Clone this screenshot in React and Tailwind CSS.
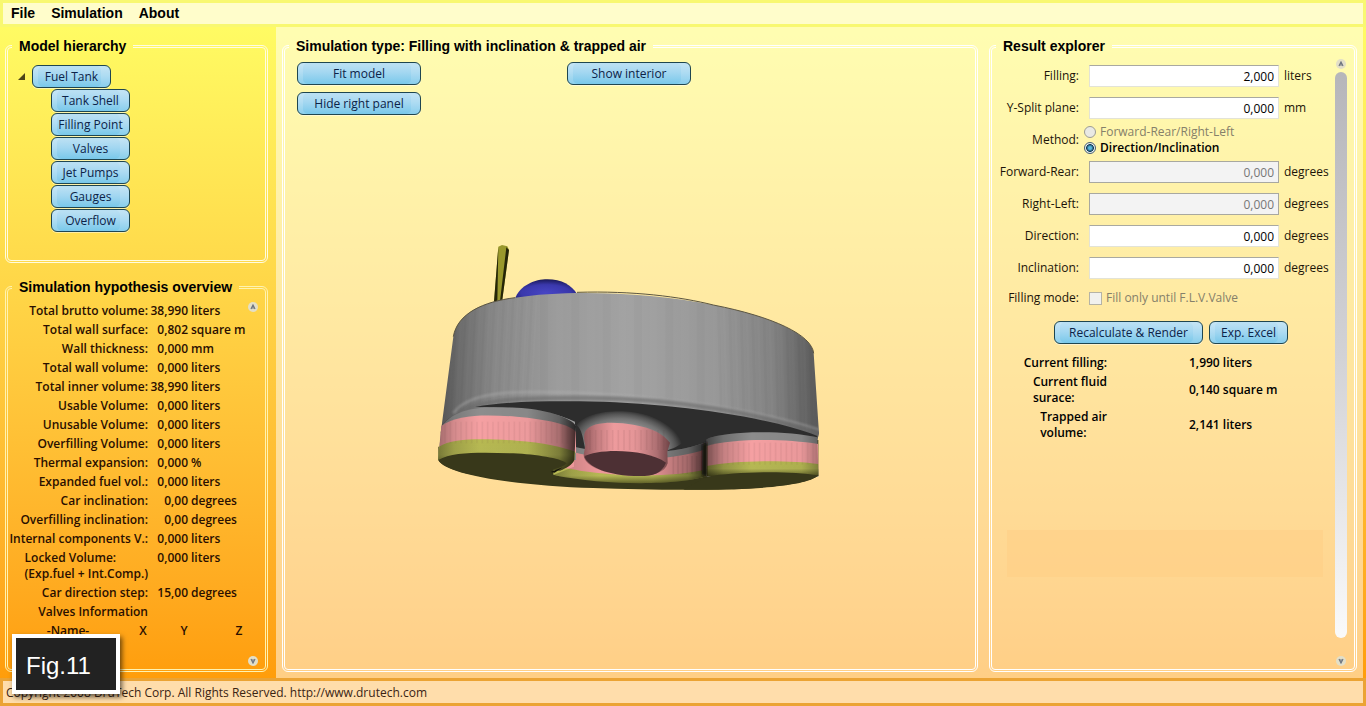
import { useState } from "react";

const tree = ["Tank Shell", "Filling Point", "Valves", "Jet Pumps", "Gauges", "Overflow"];

const hypothesis = [
    ["Total brutto volume:", "38,990", "liters"],
    ["Total wall surface:", "0,802", "square m"],
    ["Wall thickness:", "0,000", "mm"],
    ["Total wall volume:", "0,000", "liters"],
    ["Total inner volume:", "38,990", "liters"],
    ["Usable Volume:", "0,000", "liters"],
    ["Unusable Volume:", "0,000", "liters"],
    ["Overfilling Volume:", "0,000", "liters"],
    ["Thermal expansion:", "0,000", "%"],
    ["Expanded fuel vol.:", "0,000", "liters"],
    ["Car inclination:", "0,00", "degrees"],
    ["Overfilling inclination:", "0,00", "degrees"],
    ["Internal components V.:", "0,000", "liters"],
    ["Locked Volume:\n(Exp.fuel + Int.Comp.)", "0,000", "liters"],
    ["Car direction step:", "15,00", "degrees"],
];

const results = [
    ["Current filling:", "1,990 liters"],
    ["Current fluid\nsurace:", "0,140 square m"],
    ["Trapped air\nvolume:", "2,141 liters"],
];

const methods = [
    ["forward", "Forward-Rear/Right-Left"],
    ["direction", "Direction/Inclination"],
];

function GlassButton({ children, className }) {
    return (
        <button
            type="button"
            className={`${className} h-[23px] shrink-0 whitespace-nowrap rounded-md border border-[#1f4650] bg-linear-to-b from-[#b8dff3] from-10% via-[#a3d7f1] via-45% to-[#78c8ea] text-center text-xs leading-5 font-medium text-[#0c2348] shadow-[inset_5px_0_0_#ffffff28,inset_-9px_0_0_#ffffff20,0_1px_0_#ffffff80] hover:brightness-105`}
        >
            {children}
        </button>
    );
}

function Group({ title, children, className }) {
    return (
        <fieldset className={`${className} min-w-0 rounded-md border-[3px] border-double`}>
            <legend className="ml-1 px-[7px] font-['Liberation_Sans',Arial,sans-serif] text-sm leading-5 font-bold text-black">
                {title}
            </legend>
            {children}
        </fieldset>
    );
}

function ScrollButton({ up }) {
    return (
        <button
            type="button"
            aria-label={up ? "Scroll up" : "Scroll down"}
            className="flex size-[10px] shrink-0 items-center justify-center rounded-full bg-[#e3dfc8]"
        >
            <svg viewBox="0 0 6 6" className="size-[6px]" fill="none" stroke="#6d7480" strokeWidth="1.2">
                {up ? <path d="M1 5 3 1 5 5M2 4h2" /> : <path d="M1 1 3 5 5 1M2 2h2" />}
            </svg>
        </button>
    );
}

function Field({ id, label, value, unit, disabled }) {
    return (
        <div className="mb-[10px] flex h-[22px] items-center">
            <label htmlFor={id} className="w-[84px] shrink-0 text-right">
                {label}
            </label>
            <input
                id={id}
                type="text"
                defaultValue={value}
                disabled={disabled}
                className="mx-[10px] h-[22px] w-0 grow border border-[#e3e3d6] border-t-[#a9a9a0] bg-white px-1 text-right text-black disabled:border-[#a8a8a0] disabled:bg-[#f3f3f3] disabled:text-[#777]"
            />
            <span className="-ml-[5px] w-[45px] shrink-0">{unit}</span>
        </div>
    );
}

function facets(from, to, step) {
    const list = [];
    for (let x = from; x < to; x += step) list.push(x);
    return list;
}

function TankModel() {
    return (
        <svg viewBox="0 0 1260 840" className="w-[420px] max-w-full" role="img" aria-label="Fuel tank model">
            <defs>
                <linearGradient id="shell">
                    <stop offset="0" stopColor="#555" />
                    <stop offset=".05" stopColor="#6c6c6c" />
                    <stop offset=".14" stopColor="#878787" />
                    <stop offset=".3" stopColor="#9b9b9b" />
                    <stop offset=".5" stopColor="#a2a2a2" />
                    <stop offset=".72" stopColor="#989898" />
                    <stop offset=".88" stopColor="#828282" />
                    <stop offset="1" stopColor="#585858" />
                </linearGradient>
                <linearGradient id="shade">
                    <stop offset="0" stopColor="#000" stopOpacity=".34" />
                    <stop offset=".12" stopColor="#000" stopOpacity=".13" />
                    <stop offset=".3" stopColor="#000" stopOpacity="0" />
                    <stop offset=".65" stopColor="#000" stopOpacity=".04" />
                    <stop offset=".88" stopColor="#000" stopOpacity=".32" />
                    <stop offset="1" stopColor="#000" stopOpacity=".75" />
                </linearGradient>
                <linearGradient id="shadeRight">
                    <stop offset="0" stopColor="#000" stopOpacity=".5" />
                    <stop offset=".15" stopColor="#000" stopOpacity=".2" />
                    <stop offset=".4" stopColor="#000" stopOpacity="0" />
                    <stop offset=".85" stopColor="#000" stopOpacity=".05" />
                    <stop offset="1" stopColor="#000" stopOpacity=".3" />
                </linearGradient>
                <linearGradient id="rim" x2="0" y2="1">
                    <stop offset="0" stopColor="#b7b951" />
                    <stop offset=".5" stopColor="#b5b754" />
                    <stop offset="1" stopColor="#66672b" />
                </linearGradient>
                <radialGradient id="dome" cx=".5" cy=".65" r=".65">
                    <stop offset="0" stopColor="#4745c4" />
                    <stop offset=".6" stopColor="#3a38ac" />
                    <stop offset="1" stopColor="#1a1958" />
                </radialGradient>
                <radialGradient id="flare" gradientUnits="userSpaceOnUse" cx="0" cy="0" r="1" gradientTransform="translate(618 645) rotate(8) scale(172 104)">
                    <stop offset=".6" stopColor="#8a8a8a" />
                    <stop offset=".75" stopColor="#747474" />
                    <stop offset=".88" stopColor="#545454" />
                    <stop offset="1" stopColor="#2d2d2d" />
                </radialGradient>
                <linearGradient id="cup">
                    <stop offset="0" stopColor="#8f575a" />
                    <stop offset=".14" stopColor="#c07a7d" />
                    <stop offset=".35" stopColor="#ee9b9d" />
                    <stop offset=".6" stopColor="#e49597" />
                    <stop offset=".85" stopColor="#ad6f72" />
                    <stop offset="1" stopColor="#6e4245" />
                </linearGradient>
                <filter id="soft">
                    <feGaussianBlur stdDeviation="3" />
                </filter>
                <clipPath id="shellClip">
                    <path d="M100 320C112 250 190 215 285 203 440 178 690 186 880 225 1060 260 1176 315 1181 370L1197 610 1190 640 60 640Z" />
                </clipPath>
            </defs>

            {/* filler pipe and dome */}
            <path d="M235 50 246 45 262 49 267 60 246 216H222Z" fill="#99982c" />
            <path d="M235 50 232 215H222ZM259 52 267 60 246 216 240 214Z" fill="#252508" />
            <path d="M284 208C300 165 345 148 382 148 425 148 455 166 471 192L465 210Z" fill="url(#dome)" />

            {/* bottom plate */}
            <path d="M55 650V690C75 735 300 768 520 774 830 785 1130 782 1195 737V630Z" fill="#38381a" />

            {/* shell */}
            <path d="M100 320C112 250 190 215 285 203 440 178 690 186 880 225 1060 260 1176 315 1181 370L1197 610 1190 640Q850 690 465 655L62 610Z" fill="url(#shell)" />
            <g clipPath="url(#shellClip)">
                {facets(85, 330, 14).map((x, i) => (
                    <path key={x} d={`M${x + 24} 190 L${x} 650h7L${x + 31} 190Z`} fill={i % 2 ? "#fff" : "#000"} opacity=".02" />
                ))}
                {facets(360, 880, 47).map((x, i) => (
                    <path key={x} d={`M${x} 180V650h24V180Z`} fill={i % 2 ? "#fff" : "#000"} opacity=".015" />
                ))}
                {facets(890, 1190, 17).map((x, i) => (
                    <path key={x} d={`M${x} 190 L${x + 12} 650h8L${x + 8} 190Z`} fill={i % 2 ? "#fff" : "#000"} opacity=".02" />
                ))}
                <path d="M100 550C140 495 240 485 340 486 620 484 980 528 1200 600" fill="none" stroke="#b4b4b4" strokeWidth="8" opacity=".4" filter="url(#soft)" />
                <path d="M120 545C200 505 330 503 500 504 760 505 1040 550 1200 615" fill="none" stroke="#6a6a6a" strokeWidth="14" opacity=".6" filter="url(#soft)" />
            </g>
            <path d="M100 320C112 250 190 215 285 203M471 187C640 182 780 200 880 225 1060 260 1176 315 1181 370" fill="none" stroke="#5b5541" strokeWidth="3" />

            {/* recessed underside */}
            <path d="M165 531C250 515 360 513 480 514 740 517 1050 560 1192 618L1190 636 860 660C830 665 800 662 740 668L465 665V575C400 545 300 530 165 531Z" fill="#2d2d2d" />

            {/* rear cylinder */}
            <path d="M462 650C560 674 760 678 860 636V735L640 750 420 720Z" fill="#8e8e8e" />
            <path d="M462 667C560 694 760 696 860 656V735L640 750 420 720Z" fill="#ee989a" />
            <path d="M400 722C420 710 450 715 480 722 610 742 760 742 860 718V738C780 766 560 768 400 735Z" fill="url(#rim)" />
            <path d="M462 650C560 674 760 678 860 636V738C780 766 560 768 400 735L462 710Z" fill="url(#shade)" />
            {facets(760, 850, 14).map((x) => (
                <path key={x} d={`M${x} 678v54`} stroke="#3d2728" strokeWidth="5" opacity=".1" />
            ))}

            {/* left cylinder */}
            <path d="M64 590C110 525 200 532 290 533 370 536 455 562 468 588V690H55Z" fill="#8d8d8d" />
            <path d="M64 588C110 552 200 553 290 560 380 568 450 582 468 606V668H57Z" fill="#f5a0a2" />
            <path d="M57 650C100 622 200 626 290 632 370 637 430 652 466 665L463 690C455 706 440 714 420 722L54 690Z" fill="url(#rim)" />
            <path d="M64 588C110 525 200 532 290 533 370 536 455 562 468 588L463 690C455 706 440 714 420 722L54 690Z" fill="url(#shade)" />
            {facets(75, 460, 16).map((x) => (
                <path key={x} d={`M${x} 575v65`} stroke="#5d3b3c" strokeWidth="5" opacity=".07" />
            ))}
            <path d="M55 690C100 664 190 668 280 670 350 674 420 684 440 700 430 712 405 715 390 724 390 732 400 735 420 742L360 760C200 748 75 725 55 690Z" fill="#38381a" />
            <path d="M392 726 428 712 404 728Z" fill="#12120a" />

            {/* right cylinder */}
            <path d="M860 628C920 600 1100 602 1192 622L1195 740H860Z" fill="#8c8c8c" />
            <path d="M860 648C940 624 1100 626 1194 642L1195 716H860Z" fill="#f5a0a2" />
            <path d="M860 708C950 690 1110 690 1195 702V738H860Z" fill="url(#rim)" />
            <path d="M860 628C920 600 1100 602 1192 622L1195 738H860Z" fill="url(#shadeRight)" />
            {facets(875, 1190, 16).map((x) => (
                <path key={x} d={`M${x} 638v66`} stroke="#5d3b3c" strokeWidth="5" opacity=".07" />
            ))}
            <path d="M860 740C950 724 1110 722 1195 736 1160 772 960 782 790 779Z" fill="#38381a" />
            <path d="M847 644 862 636V738L846 736Z" fill="#17130f" filter="url(#soft)" />

            {/* centre cup */}
            <path d="M470 585C500 540 620 533 690 558 745 580 770 608 795 632 770 655 745 658 740 662L495 655C488 620 486 600 470 585Z" fill="url(#flare)" />
            <path d="M496 604C515 572 590 576 640 584 700 594 730 612 750 638L742 665 743 700C735 728 700 738 660 738 560 738 492 710 491 675L496 645Q488 620 496 604Z" fill="url(#cup)" />
            {facets(510, 740, 17).map((x) => (
                <path key={x} d={`M${x} 600v60`} stroke="#4e2c2e" strokeWidth="5" opacity=".08" />
            ))}
            <path d="M493 680C530 655 680 655 738 698 725 730 700 738 660 738 560 738 505 710 493 680Z" fill="#4d3034" />
        </svg>
    );
}

export default function App() {
    const [method, setMethod] = useState("direction");

    return (
        <div className="relative flex min-h-screen flex-col bg-linear-to-b from-[#ffff66] to-[#ff9900] px-[3px] font-['Open_Sans','Noto_Sans',sans-serif] text-xs leading-4 text-[#1c1408]">
            <nav className="-mx-[3px] border-[3px] border-[#f8f871] bg-[#fffdcb] font-['Liberation_Sans',Arial,sans-serif] text-sm leading-5 font-bold text-black">
                <ul className="flex h-[21px] gap-4 px-2">
                    <li><button type="button">File</button></li>
                    <li><button type="button">Simulation</button></li>
                    <li><button type="button">About</button></li>
                </ul>
            </nav>

            <div className="flex grow">
                <aside className="flex w-[273px] shrink-0 flex-col gap-[14px] pt-[9px] pr-2 pb-[6px] pl-[2px]">
                    <Group title="Model hierarchy" className="h-[227px] border-[#fffce0]">
                        <div className="flex items-center gap-[7px] pt-[9px] pl-[10px]">
                            <svg viewBox="0 0 7 7" className="size-[7px]"><path d="M7 0V7H0Z" fill="#4d4418" /></svg>
                            <GlassButton className="w-[79px]">Fuel Tank</GlassButton>
                        </div>
                        <ul className="mt-px flex flex-col gap-px pl-[43px]">
                            {tree.map((name) => (
                                <li key={name} className="flex">
                                    <GlassButton className="w-[79px]">{name}</GlassButton>
                                </li>
                            ))}
                        </ul>
                    </Group>

                    <Group title="Simulation hypothesis overview" className="grow border-[#fff3b0]">
                        <div className="flex h-full">
                            <div className="grow pt-[6px] font-semibold text-[#2a0f00]">
                                <table className="w-full">
                                    <tbody>
                                        {hypothesis.map(([label, value, unit]) => (
                                            <tr key={label} className="align-top">
                                                <th scope="row" className="w-[140px] pb-[3px] text-right font-semibold whitespace-nowrap">
                                                    <span className="inline-block text-left whitespace-pre">{label}</span>
                                                </th>
                                                <td className="w-[40px] text-right">{value}</td>
                                                <td className="pl-[3px] whitespace-nowrap">{unit}</td>
                                            </tr>
                                        ))}
                                    </tbody>
                                </table>
                                <p className="w-[140px] pb-[3px] text-right">Valves Information</p>
                                <div className="flex">
                                    <span className="w-[120px] text-center">-Name-</span>
                                    <span className="w-[30px] text-center">X</span>
                                    <span className="w-[52px] text-center">Y</span>
                                    <span className="w-[58px] text-center">Z</span>
                                </div>
                            </div>
                            <div className="-ml-5 flex w-5 shrink-0 flex-col items-start justify-between pt-[5px] pb-[3px]">
                                <ScrollButton up />
                                <ScrollButton />
                            </div>
                        </div>
                    </Group>
                </aside>

                <main className="flex min-w-0 grow gap-[11px] bg-white/50 px-[6px] pt-[9px] pb-[6px]">
                    <Group title="Simulation type: Filling with inclination & trapped air" className="grow border-white">
                        <div className="grid grid-cols-[270px_1fr] gap-y-[7px] pt-[6px] pl-3">
                            <GlassButton className="w-[124px]">Fit model</GlassButton>
                            <GlassButton className="w-[124px]">Show interior</GlassButton>
                            <GlassButton className="w-[124px]">Hide right panel</GlassButton>
                        </div>
                        <div className="mt-[115px] flex justify-center">
                            <TankModel />
                        </div>
                    </Group>

                    <Group title="Result explorer" className="w-[368px] shrink-0 border-white">
                        <div className="flex h-full">
                            <form className="min-w-0 grow pt-[9px]">
                                <div className="pr-[5px] pl-[3px]">
                                    <Field id="filling" label="Filling:" value="2,000" unit="liters" />
                                    <Field id="split" label="Y-Split plane:" value="0,000" unit="mm" />
                                    <div className="-mt-[5px] mb-[5px] flex h-8 items-center" role="radiogroup" aria-label="Method">
                                        <span className="w-[84px] text-right">Method:</span>
                                        <div className="ml-[5px]">
                                            {methods.map(([value, label]) => (
                                                <label
                                                    key={value}
                                                    className={`flex h-4 items-center gap-1 ${method === value ? "font-semibold text-black" : "text-[#85806a]"}`}
                                                >
                                                    <input
                                                        type="radio"
                                                        name="method"
                                                        checked={method === value}
                                                        onChange={() => setMethod(value)}
                                                        className="size-3 appearance-none rounded-full border border-[#9c9c94] bg-[#e9e9e4] checked:border-[#49606e] checked:bg-radial checked:from-[#56b7de] checked:from-20% checked:via-[#15405c] checked:via-50% checked:to-[#e8eef0] checked:to-60%"
                                                    />
                                                    {label}
                                                </label>
                                            ))}
                                        </div>
                                    </div>
                                    <Field id="forward" label="Forward-Rear:" value="0,000" unit="degrees" disabled />
                                    <Field id="right" label="Right-Left:" value="0,000" unit="degrees" disabled />
                                    <Field id="direction" label="Direction:" value="0,000" unit="degrees" />
                                    <Field id="inclination" label="Inclination:" value="0,000" unit="degrees" />
                                    <div className="flex items-center pt-px">
                                        <span className="w-[84px] text-right">Filling mode:</span>
                                        <label className="ml-[10px] flex items-center gap-1 text-[#85806a]">
                                            <input type="checkbox" disabled className="size-[13px] appearance-none border border-[#b5b3a6] bg-[#f1f1ee]" />
                                            Fill only until F.L.V.Valve
                                        </label>
                                    </div>
                                </div>
                                <div className="mt-[15px] flex gap-[6px] pl-[62px]">
                                    <GlassButton className="w-[149px]">Recalculate &amp; Render</GlassButton>
                                    <GlassButton className="w-[79px]">Exp. Excel</GlassButton>
                                </div>
                                <table className="mt-[11px] font-semibold text-black">
                                    <tbody>
                                        {results.map(([label, value]) => (
                                            <tr key={label}>
                                                <th scope="row" className="w-[115px] pb-[3px] text-right font-semibold">
                                                    <span className="inline-block text-left align-top whitespace-pre">{label}</span>
                                                </th>
                                                <td className="pb-[3px] pl-[82px] whitespace-nowrap">{value}</td>
                                            </tr>
                                        ))}
                                    </tbody>
                                </table>
                                <div className="mt-[86px] mr-[11px] ml-[15px] h-[47px] bg-[#ffce84]/50" />
                            </form>
                            <div className="flex w-5 shrink-0 flex-col items-center pt-[3px] pr-[6px] pb-[3px]">
                                <ScrollButton up />
                                <div className="mt-[3px] mb-[18px] w-3 grow rounded-full bg-linear-to-b from-[#b6b6ba] via-[#d2d2d6] to-[#fafafa]" />
                                <ScrollButton />
                            </div>
                        </div>
                    </Group>
                </main>
            </div>

            <footer className="-mx-[3px] border-[3px] border-[#eba334] bg-[#ffddab] px-[3px] pt-1 pb-[2px] text-[#3a2414]">
                Copyright 2008 DruTech Corp. All Rights Reserved. http://www.drutech.com
            </footer>

            <div className="absolute bottom-3 left-3 flex h-[60px] w-[108px] items-center border-4 border-white bg-[#222] pt-[3px] pl-[10px] font-['Liberation_Sans',Arial,sans-serif] text-2xl text-white shadow-[2px_3px_5px_#0009]">
                Fig.11
            </div>
        </div>
    );
}
